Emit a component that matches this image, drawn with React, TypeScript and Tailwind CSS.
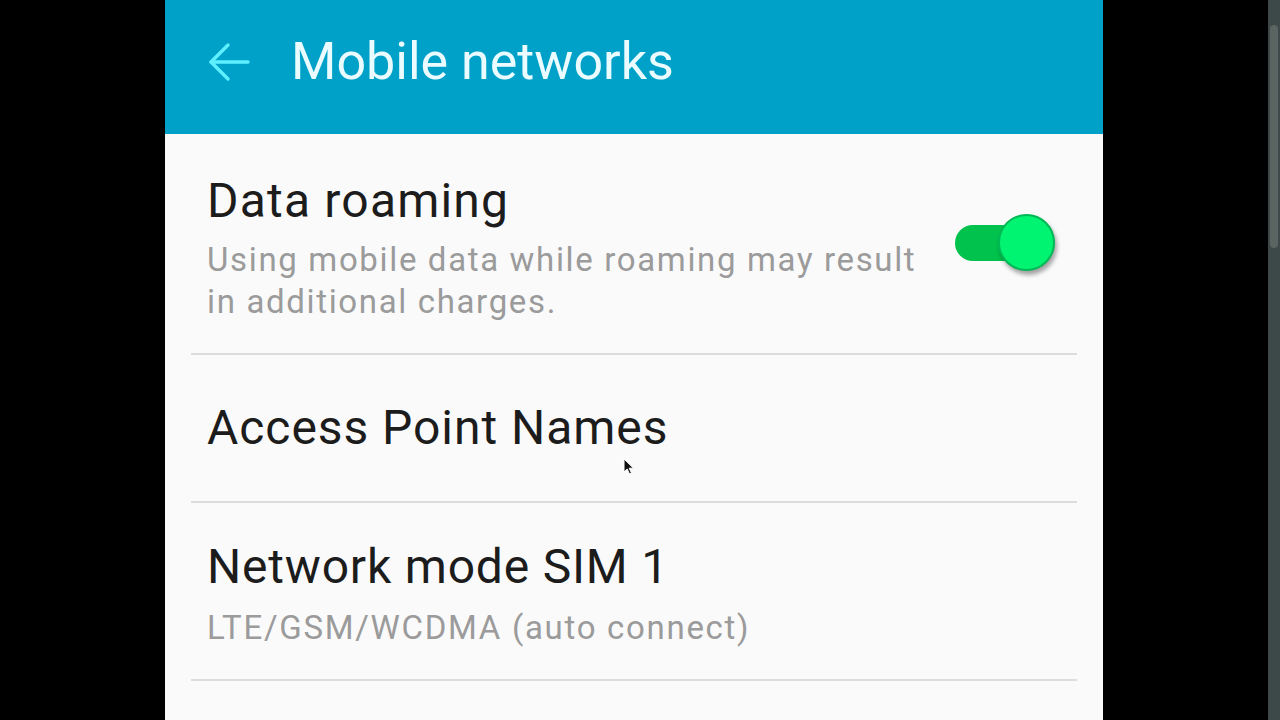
export default function App() {
  return (
    <div className="relative flex h-[720px] w-[1280px] overflow-hidden bg-black font-['Roboto',sans-serif]">
      <div className="ml-[165px] flex w-[938px] flex-col bg-[#fafafa]">
        {/* Header */}
        <header className="flex h-[134px] shrink-0 items-center bg-[#00a1c9] pb-[10px] pl-[43px]">
          <svg width="42" height="40" viewBox="0 0 42 40" fill="none" stroke="#5ef0ff" strokeWidth="3.4" strokeLinecap="round" strokeLinejoin="round">
            <path d="M40 20H3" />
            <path d="M20 3L3 20l17 17" />
          </svg>
          <h1 className="ml-[41px] text-[52px] leading-[60px] text-[#eafcff]">Mobile networks</h1>
        </header>

        {/* Settings list */}
        <div className="mx-[26px]">
          <div className="flex items-center border-b-2 border-[#dcdcdc] pt-[39px] pb-[30px] pl-[16px] pr-[22px]">
            <div className="w-[722px]">
              <div className="text-[48px] leading-[56px] tracking-[1.2px] text-[#1c1c1c]">Data roaming</div>
              <div className="mt-[10px] text-[33px] leading-[42px] tracking-[1.65px] text-[#9b9b9b]">
                Using mobile data while roaming may result in additional charges.
              </div>
            </div>
            <div className="mb-[10px] ml-auto flex items-center">
              <div className="relative h-[58px] w-[100px]">
                <div className="absolute left-0 top-[11px] h-[36px] w-[84px] rounded-full bg-[#00c24c]" />
                <div className="absolute right-0 top-0 h-[57px] w-[57px] rounded-full border-2 border-[#00b855] bg-[#00f472] shadow-[2px_4px_4px_rgba(0,0,0,0.35)]" />
              </div>
            </div>
          </div>

          <div className="flex h-[148px] items-center border-b-2 border-[#dcdcdc] pl-[16px]">
            <div className="text-[48px] leading-[56px] tracking-[0.95px] text-[#1c1c1c]">Access Point Names</div>
          </div>

          <div className="border-b-2 border-[#dcdcdc] pt-[36px] pb-[30px] pl-[16px]">
            <div className="text-[48px] leading-[56px] tracking-[0.8px] text-[#1c1c1c]">Network mode SIM 1</div>
            <div className="mt-[12px] text-[33px] leading-[42px] tracking-[1.7px] text-[#9b9b9b]">LTE/GSM/WCDMA (auto connect)</div>
          </div>
        </div>
      </div>

      <div className="flex-1" />

      {/* Scrollbar */}
      <div className="flex w-[12px] flex-col bg-[#3d4848] px-[2px] pt-[25px]">
        <div className="h-[223px] rounded-full bg-[#5a6562]" />
      </div>

      {/* Mouse cursor */}
      <svg className="absolute left-[623px] top-[458px]" width="12" height="18" viewBox="0 0 12 18">
        <path d="M1 1v13l3.2-3 2.3 5 2-1-2.3-4.8H10.5z" fill="#111" stroke="#fff" strokeWidth="1" strokeLinejoin="round" />
      </svg>
    </div>
  );
}
